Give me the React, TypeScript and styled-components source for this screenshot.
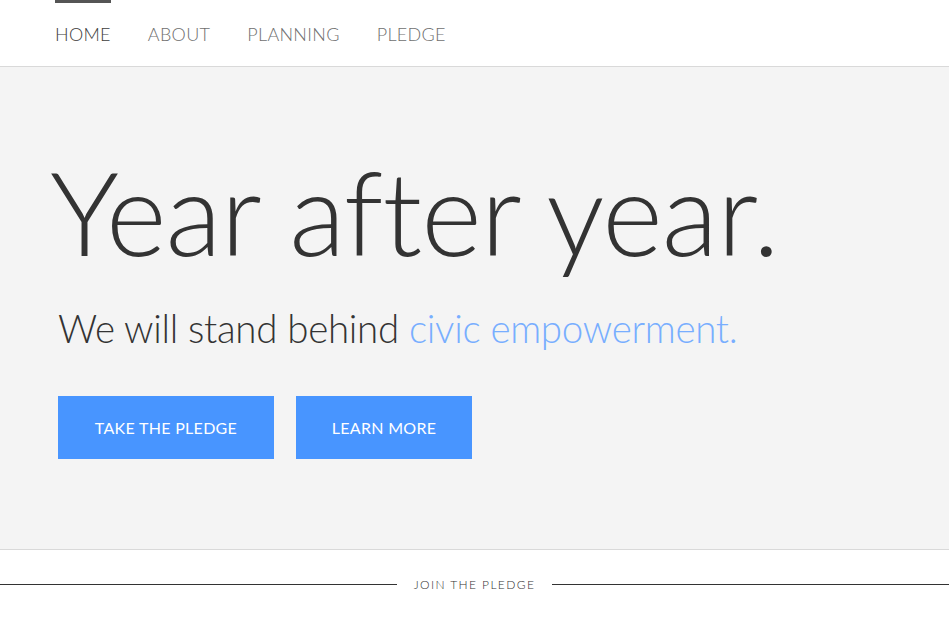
import React from "react";
import styled, { createGlobalStyle } from "styled-components";

const Global = createGlobalStyle`
  html, body { margin: 0; padding: 0; background: #fff; }
  body { font-family: Lato, "Open Sans", sans-serif; color: #333; }
  * { box-sizing: border-box; }
`;

const Header = styled.header`
  height: 67px;
  border-bottom: 1px solid #d9d9d9;
  background: #fff;
`;

const Nav = styled.nav`
  display: flex;
  gap: 37px;
  padding-left: 55px;
  height: 100%;
`;

const NavItem = styled.a<{ $active?: boolean }>`
  position: relative;
  display: flex;
  align-items: flex-start;
  padding-top: 23px;
  font-size: 18px;
  font-weight: 300;
  letter-spacing: 0.3px;
  text-transform: uppercase;
  color: ${(p) => (p.$active ? "#3d3d3d" : "#6f6f6f")};
  text-decoration: none;
  &::before {
    content: "";
    display: ${(p) => (p.$active ? "block" : "none")};
    position: absolute;
    top: 0;
    left: 0;
    right: 0;
    height: 3px;
    background: #555;
  }
`;

const Hero = styled.section`
  height: 483px;
  background: #f4f4f4;
  border-bottom: 1px solid #d9d9d9;
  padding: 70px 0 0 50px;
`;

const Title = styled.h1`
  margin: 0;
  font-size: 116px;
  font-weight: 300;
  line-height: 150px;
  color: #333;
  letter-spacing: -0.85px;
`;

const Subtitle = styled.p`
  margin: 15px 0 0;
  padding-left: 8px;
  font-size: 38.5px;
  font-weight: 300;
  line-height: 52px;
  color: #333;
  letter-spacing: -0.3px;
`;

const Accent = styled.span`
  color: #78aeff;
`;

const Buttons = styled.div`
  display: flex;
  gap: 22px;
  margin-top: 42px;
  padding-left: 8px;
`;

const Button = styled.a<{ $w: number }>`
  display: flex;
  align-items: center;
  justify-content: center;
  width: ${(p) => p.$w}px;
  height: 63px;
  background: #4895ff;
  color: #fff;
  font-size: 16px;
  font-weight: 400;
  letter-spacing: 0.3px;
  text-transform: uppercase;
  text-decoration: none;
`;

const JoinRow = styled.div`
  display: flex;
  align-items: center;
  gap: 17px;
  margin-top: 27px;
  height: 14px;
`;

const Line = styled.div`
  flex: 1;
  height: 1px;
  background: #333;
`;

const JoinText = styled.span`
  font-size: 12px;
  font-weight: 300;
  letter-spacing: 1.4px;
  color: #333;
  text-transform: uppercase;
`;

export default function App() {
  return (
    <>
      <Global />
      <Header>
        <Nav>
          <NavItem $active>Home</NavItem>
          <NavItem>About</NavItem>
          <NavItem>Planning</NavItem>
          <NavItem>Pledge</NavItem>
        </Nav>
      </Header>
      <Hero>
        <Title>Year after year.</Title>
        <Subtitle>
          We will stand behind <Accent>civic empowerment.</Accent>
        </Subtitle>
        <Buttons>
          <Button $w={216}>Take the pledge</Button>
          <Button $w={176}>Learn more</Button>
        </Buttons>
      </Hero>
      <JoinRow>
        <Line />
        <JoinText>Join the pledge</JoinText>
        <Line />
      </JoinRow>
    </>
  );
}
